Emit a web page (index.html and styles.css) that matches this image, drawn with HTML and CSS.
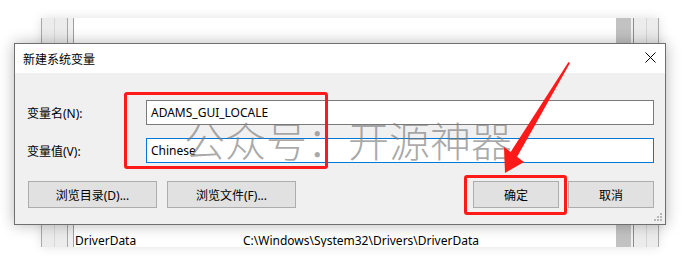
FILE: index.html
```html
<!DOCTYPE html>
<html lang="zh-CN">
<head>
    <meta charset="UTF-8">
    <title>新建系统变量</title>
    <link rel="stylesheet" href="styles.css">
</head>
<body>
    <div class="desktop">
        <!-- window behind the dialog -->
        <div class="back-window">
            <div class="side-left">
                <span class="col"></span>
                <span class="col"></span>
                <span class="col last"></span>
            </div>
            <div class="list">
                <div class="list-row">
                    <span class="var-name">DriverData</span>
                    <span class="var-value">C:\Windows\System32\Drivers\DriverData</span>
                </div>
            </div>
            <div class="scrollbar"></div>
            <div class="side-right">
                <span class="col"></span>
                <span class="col"></span>
            </div>
        </div>

        <div class="dialog">
            <div class="titlebar">
                <span class="title">新建系统变量</span>
                <svg class="close" width="11" height="11" viewBox="0 0 11 11">
                    <path d="M0.5 0.5 L10.5 10.5 M10.5 0.5 L0.5 10.5" stroke="#000" stroke-width="1"/>
                </svg>
            </div>
            <div class="dialog-body">
                <div class="field">
                    <label>变量名(N):</label>
                    <div class="input">ADAMS_GUI_LOCALE</div>
                </div>
                <div class="field">
                    <label>变量值(V):</label>
                    <div class="input focused">Chinese</div>
                </div>
                <div class="buttons">
                    <button class="btn wide">浏览目录(D)...</button>
                    <button class="btn wide">浏览文件(F)...</button>
                    <span class="spacer"></span>
                    <button class="btn">确定</button>
                    <button class="btn">取消</button>
                </div>
            </div>
            <svg class="grip" width="10" height="10" viewBox="0 0 10 10">
                <rect x="7" y="1" width="2" height="2" fill="#b8b8b8"/>
                <rect x="4" y="4" width="2" height="2" fill="#b8b8b8"/>
                <rect x="7" y="4" width="2" height="2" fill="#b8b8b8"/>
                <rect x="1" y="7" width="2" height="2" fill="#b8b8b8"/>
                <rect x="4" y="7" width="2" height="2" fill="#b8b8b8"/>
                <rect x="7" y="7" width="2" height="2" fill="#b8b8b8"/>
            </svg>
        </div>

        <!-- annotations drawn over the screenshot -->
        <div class="watermark">公众号：开源神器</div>
        <div class="mark mark-fields"></div>
        <div class="mark mark-ok"></div>
        <svg class="arrow" width="697" height="267" viewBox="0 0 697 267">
            <polygon points="568.5,62 570,63 517,157 510,153" fill="#ff1a1a"/>
            <polygon points="504,147 505,173 524,162" fill="#ff1a1a"/>
        </svg>
    </div>
</body>
</html>
```

FILE: styles.css
```css
body {
    margin: 0;
    background: #fff;
    font-family: "Noto Sans", "Noto Sans CJK SC", sans-serif;
    font-size: 12px;
    color: #000;
}

.desktop {
    position: relative;
    width: 697px;
    height: 267px;
    overflow: hidden;
}

.back-window {
    position: absolute;
    left: 41px;
    top: 18px;
    width: 618px;
    height: 229px;
    display: flex;
    overflow: hidden;
    background: #f0f0f0;
    box-shadow: 0 0 10px rgba(0, 0, 0, 0.12);
}

.side-left {
    display: flex;
    width: 32px;
}

.side-left .col {
    width: 12px;
    border-left: 1px solid #a8a8a8;
    background: #ececec;
}

.side-left .col:nth-child(2) {
    border-left-color: #d8d8d8;
}

.side-left .col.last {
    width: 5px;
    background: #f0f0f0;
}

.list {
    flex: 1;
    display: flex;
    flex-direction: column;
    justify-content: flex-end;
    background: #fff;
    border-left: 1px solid #a0a0a0;
}

.list-row {
    display: flex;
    height: 20px;
    margin-bottom: -3px;
    align-items: center;
    padding-left: 1px;
    font-size: 12px;
}

.var-name {
    width: 168px;
}

.scrollbar {
    width: 15px;
    background: #c2c2c2;
    margin-right: 2px;
}

.side-right {
    display: flex;
    width: 26px;
}

.side-right .col {
    width: 12px;
    border-left: 1px solid #8c8c8c;
    background: #ececec;
}

.side-right .col:nth-child(2) {
    border-left-color: #d4d4d4;
    border-right: 1px solid #a8a8a8;
}

.dialog {
    position: absolute;
    left: 14px;
    top: 43px;
    width: 650px;
    height: 180px;
    border: 1px solid #6f6f6f;
    background: #f0f0f0;
    box-shadow: 0 0 14px rgba(0, 0, 0, 0.28);
}

.titlebar {
    height: 29px;
    background: #fff;
    display: flex;
    align-items: center;
    justify-content: space-between;
    padding: 0 9px 0 8px;
}

.title {
    font-family: "Noto Sans CJK SC", sans-serif;
    font-size: 12px;
    margin-top: -1px;
}

.close {
    margin-top: -2px;
}

.dialog-body {
    padding: 27px 11px 0 12px;
}

.field {
    display: flex;
    align-items: center;
    margin-bottom: 13px;
}

.field label {
    width: 119px;
    font-size: 12px;
}

.input {
    flex: 1;
    height: 23px;
    line-height: 23px;
    padding-left: 4px;
    background: #fff;
    border: 1px solid #7a7a7a;
    font-size: 12px;
}

.input.focused {
    border-color: #0078d7;
}

.buttons {
    display: flex;
    margin-top: 18px;
    margin-left: 1px;
}

.btn {
    width: 86px;
    height: 27px;
    margin-right: 9px;
    padding: 0;
    background: #e1e1e1;
    border: 1px solid #adadad;
    font-family: "Noto Sans", "Noto Sans CJK SC", sans-serif;
    font-size: 12px;
    color: #000;
}

.btn.wide {
    width: 129px;
    margin-right: 10px;
}

.btn:last-child {
    margin-right: 0;
}

.spacer {
    flex: 1;
}

.grip {
    position: absolute;
    right: 2px;
    bottom: 2px;
}

.watermark {
    position: absolute;
    left: 184px;
    top: 112px;
    font-family: "Noto Sans CJK SC", sans-serif;
    font-weight: 300;
    font-size: 41px;
    line-height: 54px;
    color: rgba(120, 120, 120, 0.65);
}

.mark {
    position: absolute;
    border: 3px solid #ff1a1a;
    border-radius: 3px;
}

.mark-fields {
    left: 124px;
    top: 92px;
    width: 198px;
    height: 71px;
}

.mark-ok {
    left: 464px;
    top: 175px;
    width: 97px;
    height: 34px;
}

.arrow {
    position: absolute;
    left: 0;
    top: 0;
}
```
